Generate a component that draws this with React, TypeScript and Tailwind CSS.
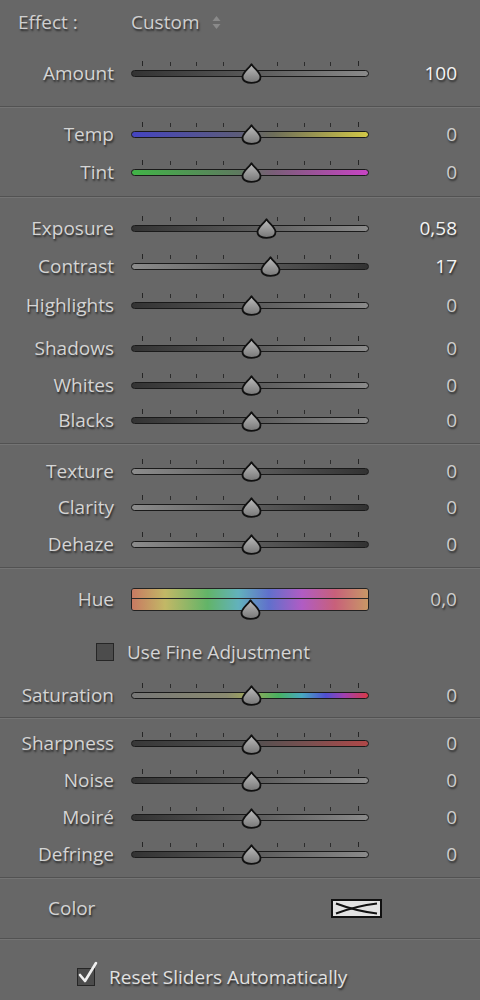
import React from 'react';

type SliderRow = {
  label: string;
  value: string;
  pos: number;
  track: string;
  bright?: boolean;
  mt: string;
  h?: string;
};

const dark = 'bg-[linear-gradient(to_right,#333,#595959_50%,#8a8a8a)]';
const light = 'bg-[linear-gradient(to_right,#8c8c8c,#5c5c5c_50%,#323232)]';

const txt =
  'font-["Open_Sans",sans-serif] font-medium text-[19px] leading-none [text-shadow:1px_2px_2px_rgba(0,0,0,0.6)]';

const Divider: React.FC<{ mt: string }> = ({ mt }) => (
  <div className={`${mt} h-[2px] border-t border-[#525252] border-b border-b-[#747474]`} />
);

const Thumb: React.FC<{ left: number; top: string }> = ({ left, top }) => (
  <svg
    width="21"
    height="21"
    viewBox="0 0 21 21"
    className={`absolute ${top}`}
    style={{ left: left - 10.5 }}
  >
    <defs>
      <linearGradient id="thumbFill" x1="0" y1="0" x2="0" y2="1">
        <stop offset="0" stopColor="#bdbdbd" />
        <stop offset="1" stopColor="#777" />
      </linearGradient>
    </defs>
    <path
      d="M10.5 1.2 C13.5 6 19.5 9.5 19.5 14 C19.5 18 15.5 19.8 10.5 19.8 C5.5 19.8 1.5 18 1.5 14 C1.5 9.5 7.5 6 10.5 1.2 Z"
      fill="url(#thumbFill)"
      stroke="#111"
      strokeWidth="1.8"
      strokeLinejoin="round"
    />
  </svg>
);

const ticks = [11, 39, 65, 92, 146, 173, 199, 227];

const Slider: React.FC<SliderRow> = ({ label, value, pos, track, bright, mt, h = 'h-[38px]' }) => (
  <div className={`${mt} ${h} flex items-center`}>
    <div className={`${txt} w-[114px] text-right text-[#d4d4d4]`}>{label}</div>
    <div className="relative ml-[17px] flex h-[38px] w-[238px] items-center">
      {ticks.map((t, i) => (
        <div
          key={t}
          className={
            i === 0 || i === ticks.length - 1
              ? 'absolute top-[7px] h-[5px] w-px bg-[#262626]'
              : 'absolute top-[8px] h-[4px] w-px bg-[#2c2c2c]'
          }
          style={{ left: t }}
        />
      ))}
      <div className={`h-[7px] w-full rounded-full border border-[#1a1a1a] ${track}`} />
      <Thumb left={pos} top="top-[9px]" />
    </div>
    <div
      className={`${txt} flex-1 pr-[23px] text-right ${bright ? 'text-[#f3f3f3]' : 'text-[#cdcdcd]'}`}
    >
      {value}
    </div>
  </div>
);

const Checkbox: React.FC<{ checked?: boolean }> = ({ checked }) => (
  <div className="relative h-[18px] w-[18px] border border-[#262626] bg-[#4c4c4c]">
    {checked && (
      <svg width="22" height="24" viewBox="0 0 22 24" className="absolute left-[-1px] top-[-8px]">
        <path
          d="M3 14 L8 20 L19 2"
          fill="none"
          stroke="#f0f0f0"
          strokeWidth="2.6"
          strokeLinecap="round"
          strokeLinejoin="round"
        />
      </svg>
    )}
  </div>
);

const hueBar =
  'bg-[linear-gradient(to_right,#c87a62,#c2b866_14%,#62b468_32%,#62b2bc_45%,#6070cc_58%,#b05cc4_72%,#c8607a_86%,#c89866)]';

export default function App() {
  return (
    <div className="h-[1000px] w-[480px] overflow-hidden bg-[#676767]">
      <div className="flex h-[44px] items-center">
        <div className={`${txt} w-[131px] pl-[18px] text-[#cfcfcf]`}>Effect :</div>
        <div className={`${txt} text-[#cfcfcf]`}>Custom</div>
        <svg width="9" height="15" viewBox="0 0 9 15" className="ml-[13px]">
          <path d="M4.5 1 L8.5 6 H0.5 Z" fill="#8a8a8a" />
          <path d="M4.5 14 L8.5 9 H0.5 Z" fill="#8a8a8a" />
        </svg>
      </div>

      <Slider mt="mt-[10px]" label="Amount" value="100" pos={120} track={dark} bright />
      <Divider mt="mt-[14px]" />

      <Slider
        mt="mt-[7px]"
        label="Temp"
        value="0"
        pos={120}
        track="bg-[linear-gradient(to_right,#4444c0,#5c5c7a_45%,#6e6e5a_60%,#d2c848)]"
      />
      <Slider
        mt="mt-0"
        label="Tint"
        value="0"
        pos={120}
        track="bg-[linear-gradient(to_right,#41b447,#5e7a5f_45%,#7a5e78_60%,#c844c4)]"
      />
      <Divider mt="mt-[5px]" />

      <Slider mt="mt-[11px]" label="Exposure" value="0,58" pos={135} track={dark} bright />
      <Slider mt="mt-0" label="Contrast" value="17" pos={139} track={light} bright />
      <Slider mt="mt-[1px]" label="Highlights" value="0" pos={120} track={dark} />
      <Slider mt="mt-[5px]" label="Shadows" value="0" pos={120} track={dark} />
      <Slider mt="mt-0" h="h-[36px]" label="Whites" value="0" pos={120} track={dark} />
      <Slider mt="mt-0" h="h-[35px]" label="Blacks" value="0" pos={120} track={dark} />
      <Divider mt="mt-[5px]" />

      <Slider mt="mt-[8px]" h="h-[36px]" label="Texture" value="0" pos={120} track={light} />
      <Slider mt="mt-0" h="h-[36px]" label="Clarity" value="0" pos={120} track={light} />
      <Slider mt="mt-0" label="Dehaze" value="0" pos={120} track={light} />
      <Divider mt="mt-[4px]" />

      <div className="mt-[11px] flex h-[38px] items-center">
        <div className={`${txt} w-[114px] text-right text-[#d4d4d4]`}>Hue</div>
        <div className="relative ml-[17px] flex h-full w-[238px] items-center">
          <div className="flex h-[23px] w-full flex-col overflow-hidden rounded-[3px] border border-[#222]">
            <div className={`h-1/2 w-full border-b border-[#2a2a2a] ${hueBar}`} />
            <div className={`h-1/2 w-full ${hueBar}`} />
          </div>
          <Thumb left={119} top="top-[19px]" />
        </div>
        <div className={`${txt} flex-1 pr-[23px] text-right text-[#cdcdcd]`}>0,0</div>
      </div>

      <div className="mt-[19px] flex h-[30px] items-center pl-[96px]">
        <div className="h-[18px] w-[18px] border border-[#262626] bg-[#4c4c4c]" />
        <div className={`${txt} ml-[13px] text-[#d4d4d4]`}>Use Fine Adjustment</div>
      </div>

      <Slider
        mt="mt-[9px]"
        label="Saturation"
        value="0"
        pos={120}
        track="bg-[linear-gradient(to_right,#777,#8a8a70_40%,#a0a85a_50%,#48b060_62%,#48a8c0_72%,#5050d0_82%,#a040b0_90%,#d83a48)]"
      />
      <Divider mt="mt-[3px]" />

      <Slider
        mt="mt-[6px]"
        h="h-[37px]"
        label="Sharpness"
        value="0"
        pos={120}
        track="bg-[linear-gradient(to_right,#383838,#505050_50%,#7a5050_75%,#b04848)]"
      />
      <Slider mt="mt-0" h="h-[37px]" label="Noise" value="0" pos={120} track={dark} />
      <Slider mt="mt-0" h="h-[37px]" label="Moiré" value="0" pos={120} track={dark} />
      <Slider mt="mt-0" h="h-[36px]" label="Defringe" value="0" pos={120} track={dark} />
      <Divider mt="mt-[5px]" />

      <div className="mt-[10px] flex h-[38px] items-center">
        <div className={`${txt} w-[331px] pl-[48px] text-[#d4d4d4]`}>Color</div>
        <div className="h-[19px] w-[51px] border-2 border-[#111] bg-[#e2e2e2]">
          <svg width="47" height="15" viewBox="0 0 47 15" className="block">
            <path d="M3 2.5 Q23 10 44 12.5" fill="none" stroke="#111" strokeWidth="2" />
            <path d="M3 12.5 Q23 5 44 2.5" fill="none" stroke="#111" strokeWidth="2" />
          </svg>
        </div>
      </div>
      <Divider mt="mt-[11px]" />

      <div className="mt-[18px] flex h-[38px] items-center pl-[77px]">
        <Checkbox checked />
        <div className={`${txt} ml-[14px] text-[#e0e0e0]`}>Reset Sliders Automatically</div>
      </div>
    </div>
  );
}
